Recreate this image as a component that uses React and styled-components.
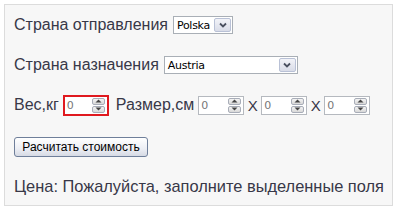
import React from "react";
import styled, { createGlobalStyle } from "styled-components";

const Global = createGlobalStyle`
	html, body {
		margin: 0;
		padding: 0;
		background: #ffffff;
	}
	body {
		font-family: "Liberation Sans", Arial, sans-serif;
	}
`;

const Panel = styled.div`
	margin: 4px;
	width: 389px;
	height: 202px;
	box-sizing: border-box;
	border: 1px solid #dcdcdc;
	background: #f7f7f7;
	padding: 11px 9px;
	display: flex;
	flex-direction: column;
	align-items: flex-start;
	color: #383848;
	font-size: 16px;
`;

const Row = styled.div`
	display: flex;
	align-items: center;
	gap: ${(p) => p.gap || 5}px;
	height: 20px;
	margin-bottom: ${(p) => p.mb || 0}px;
`;

const Label = styled.span`
	white-space: nowrap;
	margin: 0 ${(p) => p.mr || 0}px 0 ${(p) => p.ml || 0}px;
`;

const SelectBox = styled.div`
	width: ${(p) => p.w}px;
	height: 18px;
	box-sizing: border-box;
	border: 1px solid #a9afb6;
	background: #fff;
	display: flex;
	align-items: center;
	padding-left: 3px;
	font-family: "DejaVu Sans", Tahoma, sans-serif;
	font-size: 11px;
	color: #000;
`;

const SelectText = styled.span`
	flex: 1;
	letter-spacing: -0.3px;
`;

const Arrow = styled.div`
	width: 17px;
	height: 14px;
	margin-right: 1px;
	box-sizing: border-box;
	border: 1px solid #b9c1d6;
	border-radius: 2px;
	background: linear-gradient(#f2f3f8, #d9dce8);
	display: flex;
	align-items: center;
	justify-content: center;
`;

const NumBox = styled.div`
	width: 46px;
	height: ${(p) => (p.error ? 21 : 19)}px;
	box-sizing: border-box;
	border: ${(p) => (p.error ? "2px solid #e0191f" : "1px solid #b5b9bf")};
	background: #fff;
	display: flex;
	align-items: center;
	padding-left: 2px;
	font-family: "DejaVu Sans", Tahoma, sans-serif;
	font-size: 11px;
	color: #777;
`;

const NumText = styled.span`
	flex: 1;
`;

const Spin = styled.div`
	width: 13px;
	height: 15px;
	margin-right: 2px;
	display: flex;
	flex-direction: column;
	gap: 1px;
`;

const SpinBtn = styled.div`
	flex: 1;
	box-sizing: border-box;
	border: 1px solid #a8adb8;
	border-radius: 2px;
	background: linear-gradient(#f4f4f4, #d8d8d8);
	display: flex;
	align-items: center;
	justify-content: center;
`;

const Times = styled.span`
	font-size: 15px;
	margin: 0 -0.5px;
`;

const Button = styled.div`
	flex: none;
	width: 134px;
	height: 20px;
	box-sizing: border-box;
	border: 1px solid #6f7f9a;
	border-radius: 3px;
	background: linear-gradient(#ffffff, #eceef4 60%, #d6dae4);
	display: flex;
	align-items: center;
	justify-content: center;
	font-family: "Liberation Sans", Tahoma, sans-serif;
	font-size: 12px;
	color: #000;
	margin-top: 22px;
`;

const Price = styled.div`
	margin-top: 20px;
	font-size: 16.4px;
	white-space: nowrap;
`;

const Chevron = () => (
	<svg width="8" height="6" viewBox="0 0 8 6">
		<path d="M1 1.5 L4 4.5 L7 1.5" stroke="#4a5060" strokeWidth="1.8" fill="none" />
	</svg>
);

const Tri = ({ up }) => (
	<svg width="7" height="4" viewBox="0 0 7 4">
		<path d={up ? "M0.5 3.5 L3.5 0.5 L6.5 3.5 Z" : "M0.5 0.5 L3.5 3.5 L6.5 0.5 Z"} fill="#444" />
	</svg>
);

const Select = ({ value, w }) => (
	<SelectBox w={w}>
		<SelectText>{value}</SelectText>
		<Arrow>
			<Chevron />
		</Arrow>
	</SelectBox>
);

const Num = ({ error }) => (
	<NumBox error={error}>
		<NumText>0</NumText>
		<Spin>
			<SpinBtn>
				<Tri up />
			</SpinBtn>
			<SpinBtn>
				<Tri />
			</SpinBtn>
		</Spin>
	</NumBox>
);

export default function App() {
	return (
		<>
			<Global />
			<Panel>
				<Row mb={22}>
					<Label>Страна отправления</Label>
					<Select value="Polska" w={60} />
				</Row>
				<Row mb={21}>
					<Label>Страна назначения</Label>
					<Select value="Austria" w={134} />
				</Row>
				<Row gap={4}>
					<Label>Вес,кг</Label>
					<Num error />
					<Label ml={3}>Размер,см</Label>
					<Num />
					<Times>X</Times>
					<Num />
					<Times>X</Times>
					<Num />
				</Row>
				<Button>Расчитать стоимость</Button>
				<Price>Цена: Пожалуйста, заполните выделенные поля</Price>
			</Panel>
		</>
	);
}
